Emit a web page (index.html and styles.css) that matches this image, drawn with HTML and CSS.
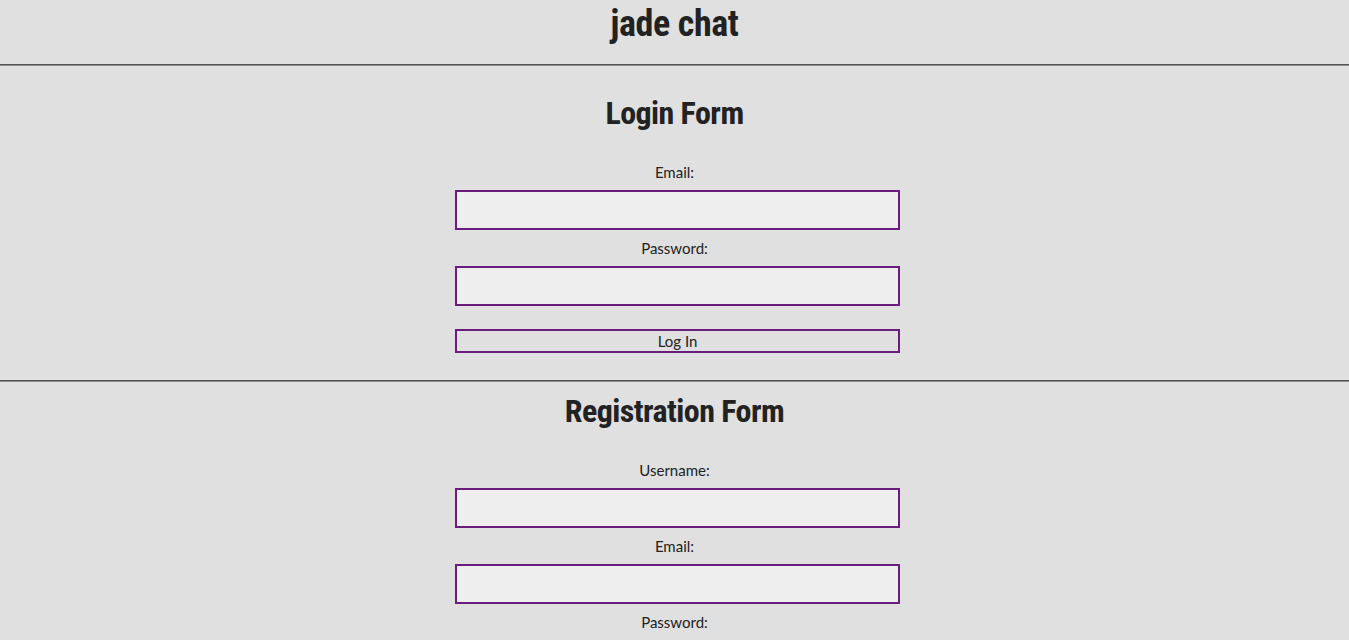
FILE: index.html
```html
<!DOCTYPE html>
<html lang="en">
<head>
<meta charset="utf-8">
<title>jade chat</title>
<link rel="stylesheet" href="styles.css">
</head>
<body>
<header class="site-header">
  <h1 class="site-title">jade chat</h1>
</header>
<hr class="divider">
<section class="panel panel-login">
  <h2 class="panel-title">Login Form</h2>
  <form class="form">
    <label class="field-label" for="login-email">Email:</label>
    <input class="field-input" id="login-email" type="email">
    <label class="field-label" for="login-pass">Password:</label>
    <input class="field-input" id="login-pass" type="password">
    <button class="form-button" type="button">Log In</button>
  </form>
</section>
<hr class="divider">
<section class="panel panel-register">
  <h2 class="panel-title">Registration Form</h2>
  <form class="form">
    <label class="field-label" for="reg-user">Username:</label>
    <input class="field-input" id="reg-user" type="text">
    <label class="field-label" for="reg-email">Email:</label>
    <input class="field-input" id="reg-email" type="email">
    <label class="field-label" for="reg-pass">Password:</label>
    <input class="field-input" id="reg-pass" type="password">
    <button class="form-button" type="button">Register</button>
  </form>
</section>
</body>
</html>
```
FILE: styles.css
```css
html, body {
  margin: 0;
  padding: 0;
  background: #e0e0e0;
  color: #222222;
  font-family: Lato, "Open Sans", sans-serif;
  font-size: 15px;
}

.site-header {
  height: 64px;
  box-sizing: border-box;
  padding-top: 2px;
  text-align: center;
}

.site-title {
  margin: 0;
  font-family: "Roboto Condensed", "DejaVu Sans", sans-serif;
  font-stretch: condensed;
  font-weight: bold;
  font-size: 36px;
  line-height: 44px;
  letter-spacing: -0.4px;
  color: #222222;
}

.divider {
  margin: 0;
  border: 0;
  height: 0;
  border-top: 1px solid #555555;
  border-bottom: 1px solid #8a8a8a;
}

.panel {
  text-align: center;
}

.panel-login {
  padding: 27px 0 27px;
}

.panel-register {
  padding: 9px 0 27px;
}

.panel-title {
  margin: 0 0 29px;
  font-family: "Roboto Condensed", "DejaVu Sans", sans-serif;
  font-stretch: condensed;
  font-weight: bold;
  font-size: 32px;
  line-height: 40px;
  letter-spacing: -0.55px;
  color: #222222;
}

.form {
  display: flex;
  flex-direction: column;
  align-items: center;
}

.field-label {
  display: block;
  line-height: 20px;
  margin: 0 0 8px;
}

.field-input {
  display: block;
  width: 33%;
  height: 40px;
  box-sizing: border-box;
  margin: 0 0 8px 6px;
  border: 2px solid #6b1d7e;
  background: #eeeeee;
  font-family: inherit;
  font-size: 15px;
}

.form-button {
  display: block;
  width: 33%;
  height: 24px;
  box-sizing: border-box;
  margin: 15px 0 0 6px;
  padding: 0;
  border: 2px solid #6b1d7e;
  background: transparent;
  color: #222222;
  font-family: inherit;
  font-size: 15px;
  line-height: 20px;
}
```
